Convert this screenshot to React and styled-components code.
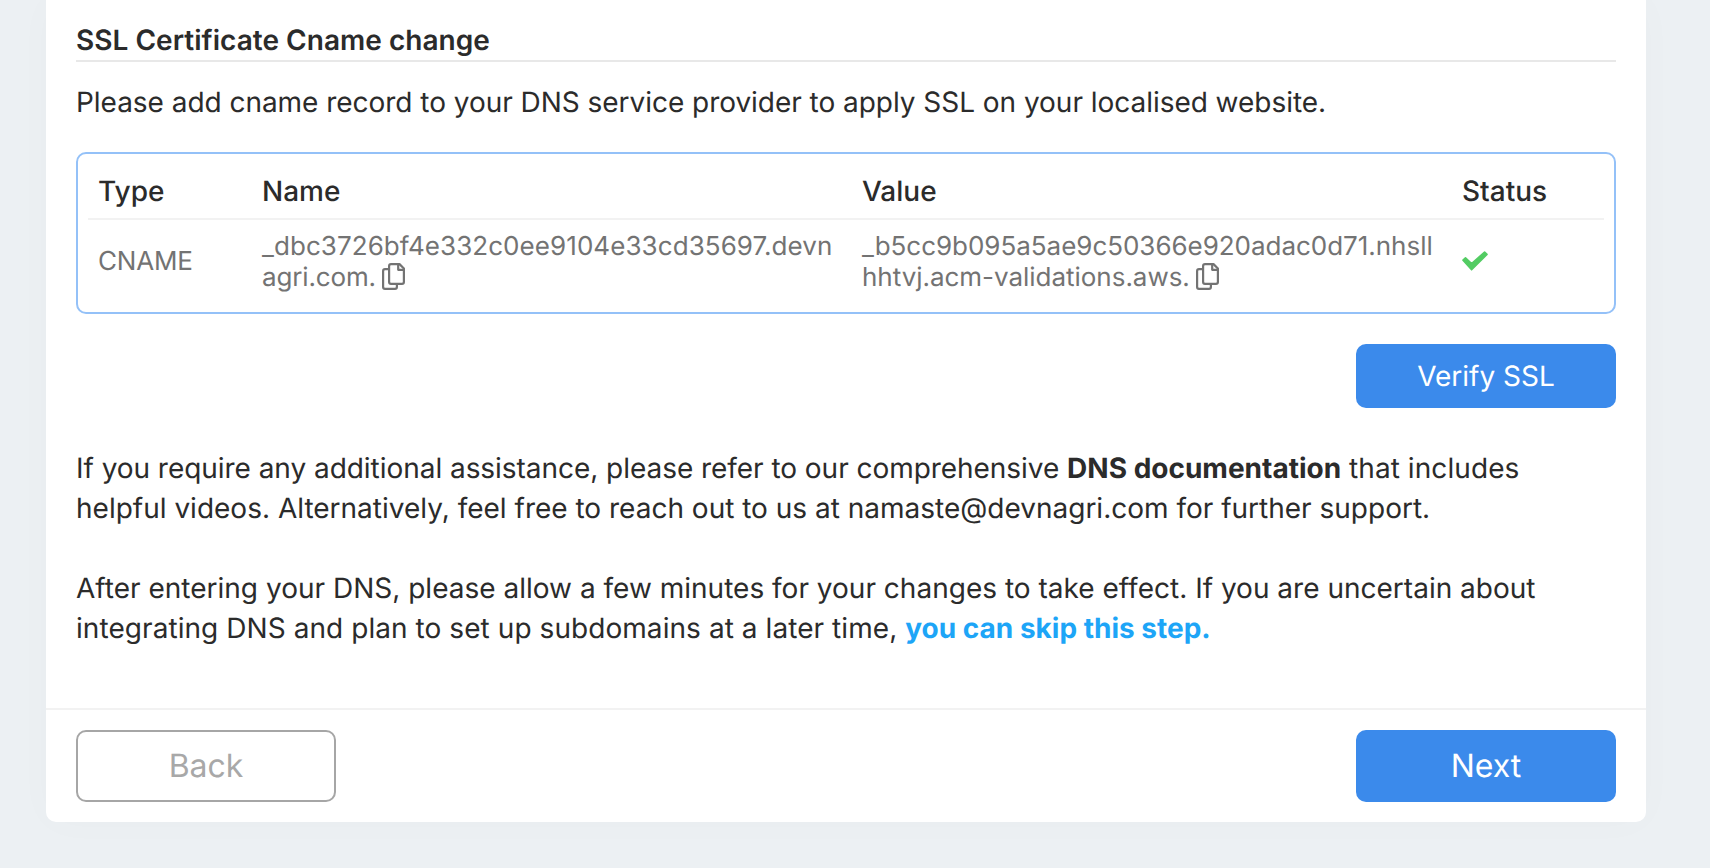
import React from "react";
import styled, { createGlobalStyle } from "styled-components";

const GlobalStyle = createGlobalStyle`
  *, *::before, *::after { box-sizing: border-box; }
  body {
    margin: 0;
    background: #ecf0f3;
    color: #2b2b2b;
    font-family: Inter, "Liberation Sans", sans-serif;
    text-rendering: geometricPrecision;
  }
`;

const Page = styled.main`
  height: 868px;
  padding: 0 64px 46px 46px;
  overflow: hidden;
`;

const Card = styled.section`
  display: flex;
  flex-direction: column;
  width: 1600px;
  height: 822px;
  background: #fff;
  border-radius: 0 0 10px 10px;
  box-shadow: 0 0 40px rgba(90, 110, 120, 0.02);
`;

const Body = styled.div`
  flex: 1;
  padding: 20px 30px 0;
`;

const Title = styled.h2`
  height: 42px;
  margin: 0;
  border-bottom: 2px solid #e8e8e8;
  font-size: 28px;
  font-weight: 600;
  line-height: 40px;
  letter-spacing: 0.03px;
`;

const Text = styled.p`
  margin: ${(p) => p.$margin || "0"};
  font-size: 28px;
  line-height: 40px;
  letter-spacing: ${(p) => p.$track || 0}px;
`;

const Phrase = styled.span`
  letter-spacing: ${(p) => p.$track || 0}px;
`;

const Link = styled.a`
  color: ${(p) => p.$color || "inherit"};
  font-weight: 700;
`;

const Records = styled.div`
  height: 162px;
  margin-bottom: 30px;
  padding: 10px;
  border: 2px solid #94c1f8;
  border-radius: 10px;
`;

const Row = styled.div`
  display: grid;
  grid-template-columns: 164px 600px 600px 1fr;
  align-items: center;
`;

const HeadRow = styled(Row)`
  height: 56px;
  border-bottom: 2px solid #f2f2f2;
  font-size: 28px;
  font-weight: 500;
`;

const DataRow = styled(Row)`
  height: 82px;
  color: #737373;
  font-size: 26px;
  line-height: 31px;
`;

const Cell = styled.div`
  padding: 0 10px;
  word-break: break-all;
`;

const RecordCell = styled(Cell)`
  padding-top: 2px;
`;

const CopyIcon = styled.svg`
  width: 23px;
  height: 27px;
  margin-left: -1px;
  vertical-align: -4px;
`;

const CheckIcon = styled.svg`
  display: block;
  width: 26px;
  height: 20px;
`;

const Actions = styled.div`
  display: flex;
  justify-content: flex-end;
  margin-bottom: 40px;
`;

const Button = styled.button`
  width: 260px;
  height: ${(p) => (p.$large ? 72 : 64)}px;
  padding: ${(p) => (p.$large ? "0 0 1px" : "0")};
  border: ${(p) => (p.$outline ? "2px solid #a6a6a6" : "0")};
  border-radius: 10px;
  background: ${(p) => (p.$outline ? "#fff" : "#3b8aeb")};
  color: ${(p) => (p.$outline ? "#a8a8a8" : "#fff")};
  font-family: inherit;
  font-size: ${(p) => (p.$large ? 32 : 28)}px;
  text-rendering: inherit;
`;

const Footer = styled.footer`
  display: flex;
  justify-content: space-between;
  padding: 20px 30px;
  border-top: 2px solid #f2f2f2;
`;

function Copy() {
  return (
    <CopyIcon viewBox="0 0 23 27" fill="none" stroke="#737373" strokeWidth="2.2" strokeLinejoin="round">
      <path d="M7 6.1H3Q1.1 6.1 1.1 8V24Q1.1 25.9 3 25.9H13Q14.9 25.9 14.9 24V21" />
      <path d="M9 1.1H17.5L21.9 5.5V19Q21.9 20.9 20 20.9H9Q7.1 20.9 7.1 19V3Q7.1 1.1 9 1.1Z" />
      <path d="M16.2 1.5V6.8H21.5" />
    </CopyIcon>
  );
}

export default function App() {
  return (
    <>
      <GlobalStyle />
      <Page>
        <Card>
          <Body>
            <Title>SSL Certificate Cname change</Title>
            <Text $margin="20px 0 30px" $track={-0.035}>
              Please add cname record to your DNS service provider to apply SSL on your localised website.
            </Text>
            <Records>
              <HeadRow>
                <Cell>Type</Cell>
                <Cell>Name</Cell>
                <Cell>Value</Cell>
                <Cell>Status</Cell>
              </HeadRow>
              <DataRow>
                <Cell>
                  <Phrase $track={-0.2}>CNAME</Phrase>
                </Cell>
                <RecordCell>
                  <Phrase $track={0.07}>_dbc3726bf4e332c0ee9104e33cd35697.devn</Phrase>
                  <Phrase $track={-0.15}>agri.com.</Phrase> <Copy />
                </RecordCell>
                <RecordCell>
                  <Phrase $track={-0.03}>_b5cc9b095a5ae9c50366e920adac0d71.nhsllhhtvj.acm-validations.aws.</Phrase> <Copy />
                </RecordCell>
                <Cell>
                  <CheckIcon viewBox="0 0 26 20" fill="#53cc63" stroke="#53cc63" strokeWidth="1.6" strokeLinejoin="round">
                    <path d="M1 9.2L3.5 6.8L9.6 12.6L22.6 1L25 3.4L9.6 18.8Z" />
                  </CheckIcon>
                </Cell>
              </DataRow>
            </Records>
            <Actions>
              <Button>Verify SSL</Button>
            </Actions>
            <Text $margin="0 0 40px">
              <Phrase $track={-0.043}>
                If you require any additional assistance, please refer to our comprehensive{" "}
              </Phrase>
              <Link>DNS documentation</Link> <Phrase $track={0.08}>that includes</Phrase>
              <br />
              helpful videos. Alternatively, feel free to reach out to us at namaste@devnagri.com for further support.
            </Text>
            <Text>
              <Phrase $track={0.01}>
                After entering your DNS, please allow a few minutes for your changes to take effect. If you are uncertain about
              </Phrase>
              <br />
              <Phrase $track={0.065}>
                integrating DNS and plan to set up subdomains at a later time,{" "}
              </Phrase>
              <Link $color="#1da5f7">you can skip this step.</Link>
            </Text>
          </Body>
          <Footer>
            <Button $large $outline>Back</Button>
            <Button $large>Next</Button>
          </Footer>
        </Card>
      </Page>
    </>
  );
}
